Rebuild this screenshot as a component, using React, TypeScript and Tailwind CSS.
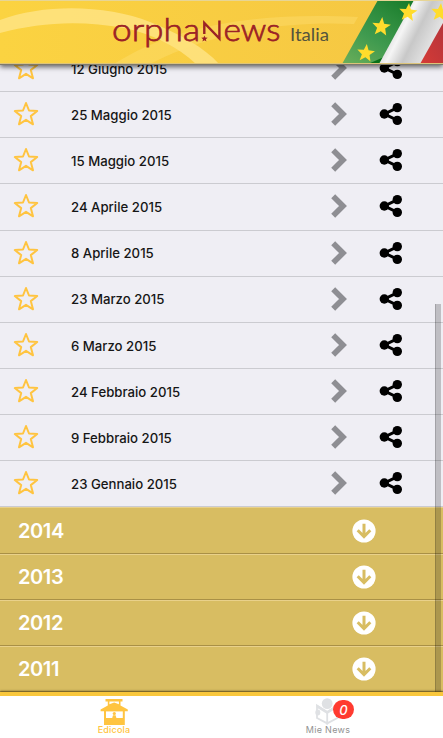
const issues = [
  '12 Giugno 2015',
  '25 Maggio 2015',
  '15 Maggio 2015',
  '24 Aprile 2015',
  '8 Aprile 2015',
  '23 Marzo 2015',
  '6 Marzo 2015',
  '24 Febbraio 2015',
  '9 Febbraio 2015',
  '23 Gennaio 2015',
]

const years = ['2014', '2013', '2012', '2011']

const STAR = 'M12 0 L15.2 8.2 L24 8.7 L17.2 14.3 L19.4 22.8 L12 18.1 L4.6 22.8 L6.8 14.3 L0 8.7 L8.8 8.2 Z'

function Banner() {
  return (
    <svg viewBox="0 0 443 64" className="block h-16 w-full">
      <defs>
        <linearGradient id="gold" x1="0" x2="1" y1="0" y2="0">
          <stop offset="0" stopColor="#fbd341" />
          <stop offset="1" stopColor="#f5c643" />
        </linearGradient>
        <linearGradient id="green" x1="0" x2="1" y1="1" y2="0">
          <stop offset="0" stopColor="#6caf5a" />
          <stop offset=".35" stopColor="#3f9a4f" />
          <stop offset=".6" stopColor="#2c8b3c" />
          <stop offset="1" stopColor="#08701c" />
        </linearGradient>
        <linearGradient id="white" x1="0" x2="1" y1="0" y2=".5">
          <stop offset="0" stopColor="#f4f4f4" />
          <stop offset=".3" stopColor="#d2d2d2" />
          <stop offset=".48" stopColor="#f5f5f5" />
          <stop offset=".68" stopColor="#c8c8c8" />
          <stop offset="1" stopColor="#e9e9e9" />
        </linearGradient>
        <linearGradient id="red" x1="0" x2="1" y1="1" y2="0">
          <stop offset="0" stopColor="#d63b36" />
          <stop offset="1" stopColor="#b5343a" />
        </linearGradient>
      </defs>
      <rect width="443" height="64" fill="url(#gold)" />
      <path d="M0 20 C45 3 108 5 150 22 C180 34 205 48 219 64 L196 64 C178 47 153 34 124 28 C82 20 40 22 0 33 Z" fill="#ffe58c" opacity=".75" />
      <path d="M114 64 C175 25 255 12 358 17 L354 24 C275 20 205 36 150 64 Z" fill="#ffe17b" opacity=".35" />
      <path d="M378 0 H443 V64 H342 Z" fill="url(#green)" />
      <path d="M368 64 L384 57 L379 64 Z" fill="#087018" />
      <path d="M414 0 H443 V64 H379 Z" fill="url(#white)" />
      <path d="M443 23 V64 H420 Z" fill="url(#red)" />
      <g fill="#ffdc2c">
        <path transform="translate(399 3) rotate(6 9 9) scale(.76)" d={STAR} />
        <path transform="translate(372 17) rotate(6 9 9) scale(.78)" d={STAR} />
        <path transform="translate(357 44) rotate(6 9 9) scale(.74)" d={STAR} />
        <path transform="translate(431 3) rotate(6 9 9) scale(.76)" d={STAR} />
      </g>
      <g fill="#9b2226" stroke="#9b2226" strokeWidth=".75" fontFamily="Lato, sans-serif" fontWeight="300" fontSize="32">
        <text x="112" y="41" textLength="88" lengthAdjust="spacingAndGlyphs">orpha</text>
        <text x="223.5" y="41" textLength="57" lengthAdjust="spacingAndGlyphs">ews</text>
      </g>
      <path d="M204.3 34 V23 L219.4 38.5 V20.5" fill="none" stroke="#9b2226" strokeWidth="2.4" />
      <path transform="translate(201.2 35.4) scale(.27)" d={STAR} fill="#9b2226" />
      <text x="290" y="41" textLength="39" lengthAdjust="spacingAndGlyphs" fill="#55533d" fontFamily="Lato, sans-serif" fontSize="17.5">Italia</text>
      <rect width="443" height="1" fill="#e7d595" />
      <rect y="63" width="443" height="1" fill="#dcc37a" />
    </svg>
  )
}

function ShareIcon() {
  return (
    <svg viewBox="0 0 24 24" className="size-6">
      <path d="M18.5 5.6 L5.5 12 L18.5 18.4" fill="none" stroke="#000" strokeWidth="3" />
      <circle cx="18.3" cy="5.6" r="4.7" />
      <circle cx="5.3" cy="12" r="4.7" />
      <circle cx="18.3" cy="18.4" r="4.7" />
    </svg>
  )
}

function IssueRow({ title }: { title: string }) {
  return (
    <li className="flex h-[46.15px] shrink-0 items-center border-b border-[#cbcbd0] bg-[#efeef4] pb-px pl-[13px]">
      <svg viewBox="-1 -1 26 26" className="size-[26px] shrink-0">
        <path d="M12 1 L15 8.5 L23.2 9 L16.8 14.1 L19 22.3 L12 17.8 L5 22.3 L7.2 14.1 L.8 9 L9 8.5 Z" fill="none" stroke="#ffc440" strokeWidth="2" strokeLinejoin="round" />
      </svg>
      <span className="ml-8 w-[260px] pt-[3px] font-[Inter] text-[13.2px] font-medium text-[#161616]">{title}</span>
      <svg viewBox="0 0 16 24" className="h-6 w-4 shrink-0">
        <path d="M2.2 2.2 L12 12 L2.2 21.8" fill="none" stroke="#8e8e93" strokeWidth="5.6" />
      </svg>
      <span className="ml-8">
        <ShareIcon />
      </span>
    </li>
  )
}

function YearRow({ year }: { year: string }) {
  return (
    <li className="flex h-[46.15px] shrink-0 items-center justify-between border-t border-b border-t-[#e9d18b] border-b-[#a99046] bg-[#d8bd62] pt-px pr-[67px] pl-[18px] text-white">
      <span className="font-[Inter] text-[20px] font-semibold tracking-[-0.4px]">{year}</span>
      <svg viewBox="0 0 24 24" className="size-6">
        <circle cx="12" cy="12" r="11.6" fill="#fff" />
        <path d="M12 4.8 V17.5 M5.7 11.3 L12 17.6 L18.3 11.3" fill="none" stroke="#d8bd62" strokeWidth="3" />
      </svg>
    </li>
  )
}

function KioskIcon() {
  return (
    <svg viewBox="0 0 28 28" className="size-7 shrink-0" fill="#ffc440">
      <path d="M5.5 1 H22.5 V3.4 H20.5 V7.6 L27.8 11.6 V13.2 H24.8 V27 H4 V13.2 H.6 V11.6 L7.8 7.6 V3.4 H5.5 Z" />
      <path d="M9.4 3.6 H18.9 V6.2 L14.2 4.4 L9.4 6.2 Z" fill="#fff" />
      <path d="M6 13.4 H22.8 V20 H6 Z" fill="#fff" />
      <circle cx="14.3" cy="15.5" r="1.6" />
      <path d="M12.2 20 L13 17.3 H15.6 L16.4 20 Z" />
    </svg>
  )
}

function ReaderIcon() {
  return (
    <svg viewBox="0 0 26 27" className="h-[27px] w-[26px] shrink-0">
      <path d="M2 7.5 L12.2 14 V25.4 L2 20 Z M22.4 7.5 L12.2 14 V25.4 L22.4 20 Z" fill="#fff" stroke="#dfe1e4" strokeWidth="1.8" />
      <path d="M1.5 6.5 L12.2 13 L22.9 6.5 V9.5 L12.2 16 L1.5 9.5 Z" fill="#dfe1e4" />
      <circle cx="12.2" cy="5.6" r="5.4" fill="#dfe1e4" />
      <ellipse cx="2.8" cy="14.5" rx="2.5" ry="3" fill="#dfe1e4" />
    </svg>
  )
}

export default function App() {
  return (
    <div className="relative flex h-[738px] w-[443px] flex-col overflow-hidden bg-white">
      <header className="z-10 h-[65px] shrink-0 border-b border-[#7d7a6d] shadow-[0_2px_5px_rgba(0,0,0,0.6)]">
        <Banner />
      </header>

      <main className="relative flex h-[627px] shrink-0 flex-col">
        {/* the list is scrolled, its first row slides under the header */}
        <ul className="-mt-[19px] flex flex-col">
          {issues.map((title) => (
            <IssueRow key={title} title={title} />
          ))}
          {years.map((year) => (
            <YearRow key={year} year={year} />
          ))}
        </ul>
        {/* scroll thumb */}
        <div className="absolute top-[239px] right-[2px] bottom-0 w-1.5 border-l border-black/15 bg-black/20" />
      </main>

      <nav className="relative flex flex-1 border-t-4 border-[#f9c73c] bg-white font-[Inter] text-[9px] leading-[10px] shadow-[0_-1px_2px_rgba(70,55,10,0.65)]">
        <a className="ml-[96px] flex w-9 flex-col items-center pt-[2px] text-[#ffc440]">
          <KioskIcon />
          <span className="-mt-px font-medium tracking-[0.2px] whitespace-nowrap">Edicola</span>
        </a>
        <a className="relative ml-[171px] flex w-[50px] flex-col items-center pt-[2px] text-[#929292]">
          <ReaderIcon />
          <span className="tracking-[0.3px] whitespace-nowrap">Mie News</span>
          <span className="absolute top-[4px] left-[30px] flex h-[19px] w-[21px] items-center justify-center rounded-full bg-[#ff3b30] text-[13px] font-medium text-white italic">0</span>
        </a>
      </nav>
    </div>
  )
}
